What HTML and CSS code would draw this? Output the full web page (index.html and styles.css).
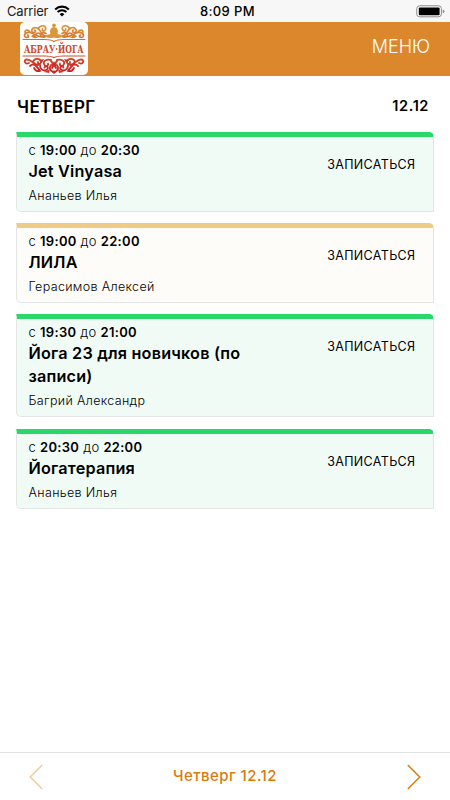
FILE: index.html
```html
<!DOCTYPE html>
<html lang="ru">
<head>
    <meta charset="UTF-8">
    <meta name="viewport" content="width=device-width, initial-scale=1.0">
    <title>Абрау-Йога</title>
    <link rel="stylesheet" href="styles.css">
</head>
<body>
    <div class="status-bar">
        <div class="carrier">
            <span>Carrier</span>
            <svg class="wifi" width="16" height="12" viewBox="0 0 16 12">
                <path d="M1.2 4.4a9.8 9.8 0 0 1 13.6 0" fill="none" stroke="#000" stroke-width="2.1"/>
                <path d="M3.6 7a6.3 6.3 0 0 1 8.8 0" fill="none" stroke="#000" stroke-width="1.9"/>
                <path d="M8 11.5L5.7 9.2a3.3 3.3 0 0 1 4.6 0z"/>
            </svg>
        </div>
        <div class="clock">8:09 PM</div>
        <svg class="battery" width="29" height="13" viewBox="0 0 29 13">
            <rect x=".8" y=".8" width="24.6" height="11" rx="2.8" fill="#fff" stroke="#888" stroke-width="1"/>
            <rect x="2.8" y="2.6" width="20.8" height="7.6" rx="1"/>
            <path d="M26.8 4.4q1.6.5 1.6 1.9t-1.6 1.9z" fill="#888"/>
        </svg>
    </div>

    <header class="header">
        <svg class="logo" width="68" height="54" viewBox="0 0 68 54">
            <defs>
                <linearGradient id="gold" x1="0" y1="0" x2="0" y2="20" gradientUnits="userSpaceOnUse">
                    <stop offset="0" stop-color="#dfa03a"/>
                    <stop offset="1" stop-color="#d4682c"/>
                </linearGradient>
                <linearGradient id="red" x1="0" y1="33" x2="0" y2="50" gradientUnits="userSpaceOnUse">
                    <stop offset="0" stop-color="#d0542c"/>
                    <stop offset="1" stop-color="#cf1820"/>
                </linearGradient>
                <!-- половина верхнего узора -->
                <g id="top-half">
                    <path d="M26 14C21 15 22 8 17 6C12 4.500 10 10 13.500 10.500C16 10.500 16 8 14.500 8M25 15C17 16 15 11.500 10 10.500C4 10 3 15 6.500 15.500C9 15.500 9 13 7.500 13M10 10C8 7 5 8 5 10M15 13C18 9 21 12 21 14M18 7C21 1.500 27 4 25.500 7.500C24.500 10 21.500 9 22.500 7M26 11.500Q23 9.500 21 12"/>
                    <path d="M11 14.500Q13 11.500 15 13.500T19 15Q15 17.500 11 14.500z" fill="#d8802e" stroke="none"/>
                    <path d="M3 17.500H25Q31 17.500 34 19.500" stroke-width="1.200"/>
                </g>
                <!-- половина нижнего узора -->
                <g id="bottom-half">
                    <path d="M3 34H25Q31 34 34 35.500" stroke-width="1.200"/>
                    <path d="M9 41C5 43 3 38 6.500 37.500C11 37 13 42 18 43M13 40C14 36 20 36 21 39.500C21.500 42.500 17.500 42.500 18 40M10 44Q13 41 16 44T20 49Q16 50 14 46M31 38C26 37 23 39 24 42C25 45 29 44 28 41.500M20 43C20 48 25 50 27.500 47C29 44.500 25 43 24.500 45.500M31 43Q28 47 33 50M31 39Q34 42 32 46"/>
                    <path d="M19 38L24 37 22 41zM24 50L30 47 29 51z" fill="#cf3428" stroke="none"/>
                </g>
            </defs>
            <rect width="68" height="53" rx="5" fill="#fff"/>
            <g fill="none" stroke="url(#gold)" stroke-width="1.700" stroke-linecap="round">
                <use href="#top-half"/>
                <use href="#top-half" transform="translate(68 0) scale(-1 1)"/>
            </g>
            <g fill="#dc963a">
                <circle cx="34" cy="3.300" r="1.900"/>
                <path d="M34 5C39 6.300 38 9.500 37.500 12Q43 13 43 14.800Q38 16.800 34 15.500Q30 16.800 25 14.800Q25 13 30.500 12C30 9.500 29 6.300 34 5z"/>
            </g>
            <text class="logo-text" x="4" y="30.800" textLength="59.500" lengthAdjust="spacingAndGlyphs">АБРАУ·ЙОГА</text>
            <g fill="none" stroke="url(#red)" stroke-width="1.800" stroke-linecap="round">
                <use href="#bottom-half"/>
                <use href="#bottom-half" transform="translate(68 0) scale(-1 1)"/>
            </g>
            <path d="M34 39l2 4-2 3-2-3zM34 48l1.800 2-1.800 2.300-1.800-2.300z" fill="#cf2a26"/>
        </svg>
        <div class="menu">МЕНЮ</div>
    </header>

    <main class="schedule">
        <div class="day">
            <h1 class="day-name">ЧЕТВЕРГ</h1>
            <div class="day-date">12.12</div>
        </div>

        <div class="card">
            <div class="info">
                <div class="time">с <b>19:00</b> до <b>20:30</b></div>
                <h2 class="title">Jet Vinyasa</h2>
                <div class="trainer">Ананьев Илья</div>
            </div>
            <div class="signup">ЗАПИСАТЬСЯ</div>
        </div>

        <div class="card card-orange">
            <div class="info">
                <div class="time">с <b>19:00</b> до <b>22:00</b></div>
                <h2 class="title">ЛИЛА</h2>
                <div class="trainer">Герасимов Алексей</div>
            </div>
            <div class="signup">ЗАПИСАТЬСЯ</div>
        </div>

        <div class="card">
            <div class="info">
                <div class="time">с <b>19:30</b> до <b>21:00</b></div>
                <h2 class="title">Йога 23 для новичков (по записи)</h2>
                <div class="trainer">Багрий Александр</div>
            </div>
            <div class="signup">ЗАПИСАТЬСЯ</div>
        </div>

        <div class="card">
            <div class="info">
                <div class="time">с <b>20:30</b> до <b>22:00</b></div>
                <h2 class="title">Йогатерапия</h2>
                <div class="trainer">Ананьев Илья</div>
            </div>
            <div class="signup">ЗАПИСАТЬСЯ</div>
        </div>
    </main>

    <footer class="footer">
        <svg class="arrow arrow-disabled" width="14" height="26" viewBox="0 0 14 26">
            <path d="M13.200 1L1.200 13l12 12"/>
        </svg>
        <div class="current-day">Четверг 12.12</div>
        <svg class="arrow" width="14" height="26" viewBox="0 0 14 26">
            <path d="M.8 1l12 12-12 12"/>
        </svg>
    </footer>
</body>
</html>
```

FILE: styles.css
```css
* {
    box-sizing: border-box;
}

body {
    margin: 0;
    height: 800px;
    display: flex;
    flex-direction: column;
    font-family: Inter, "Noto Sans", sans-serif;
    color: #000;
    background-color: #fff;
}

.status-bar {
    display: grid;
    grid-template-columns: 1fr auto 1fr;
    align-items: center;
    height: 22px;
    padding: 0 5px 0 7px;
    background-color: #f7f7f7;
    font-size: 13px;
}

.carrier {
    display: flex;
    align-items: center;
    gap: 6px;
    color: #222;
    letter-spacing: -0.2px;
}

.clock {
    font-weight: 500;
    letter-spacing: 0.4px;
    padding-left: 3px;
}

.battery {
    justify-self: end;
}

.header {
    display: flex;
    justify-content: space-between;
    height: 54px;
    padding: 0 20px;
    background-color: #dd872c;
}

.logo {
    overflow: visible;
}

.logo-text {
    font-family: "DejaVu Serif Condensed", "DejaVu Serif", serif;
    font-size: 11.8px;
    font-weight: bold;
    fill: #c9472a;
}

.menu {
    font-size: 18px;
    font-weight: 300;
    line-height: 49px;
    color: #fff;
}

.schedule {
    flex: 1;
    padding: 0 16px;
}

.day {
    display: flex;
    justify-content: space-between;
    align-items: center;
    height: 55.5px;
    padding: 6px 5px 0 1px;
}

.day-name {
    margin: 0;
    font-size: 17px;
    font-weight: 600;
    letter-spacing: 0.4px;
}

.day-date {
    font-size: 14.5px;
    font-weight: 600;
    letter-spacing: 0.6px;
    padding-bottom: 2px;
}

.card {
    display: flex;
    justify-content: space-between;
    margin-bottom: 11.4px;
    padding: 5px 17.5px 6px 11.5px;
    border: 1px solid #e3e6e4;
    border-top: 5px solid #29d869;
    border-radius: 1px 5px 1px 5px;
    background-color: #f1fbf6;
}

.card-orange {
    border-top-color: #f0cb85;
    background-color: #fefcf8;
}

.info {
    width: 240px;
}

.time {
    font-size: 13px;
    font-weight: 300;
    line-height: 17px;
    letter-spacing: 0.3px;
}

.time b {
    font-weight: 600;
}

.title {
    margin: 0;
    padding-top: 1px;
    font-size: 16.2px;
    font-weight: 600;
    line-height: 23px;
    letter-spacing: 0.2px;
}

.trainer {
    margin-top: 4px;
    font-size: 12.5px;
    font-weight: 300;
    line-height: 18px;
    letter-spacing: 0.35px;
}

.signup {
    padding-top: 14px;
    font-size: 12.5px;
    line-height: 18px;
    letter-spacing: 0.35px;
}

.footer {
    display: flex;
    justify-content: space-between;
    align-items: center;
    height: 48px;
    padding: 0 29px;
    border-top: 1px solid #e2e2e2;
}

.current-day {
    padding-bottom: 2px;
    font-size: 15px;
    font-weight: 500;
    letter-spacing: 0.45px;
    color: #d97a0c;
}

.arrow path {
    fill: none;
    stroke: #d97a0c;
    stroke-width: 1.4;
}

.arrow-disabled {
    opacity: 0.4;
}
```
